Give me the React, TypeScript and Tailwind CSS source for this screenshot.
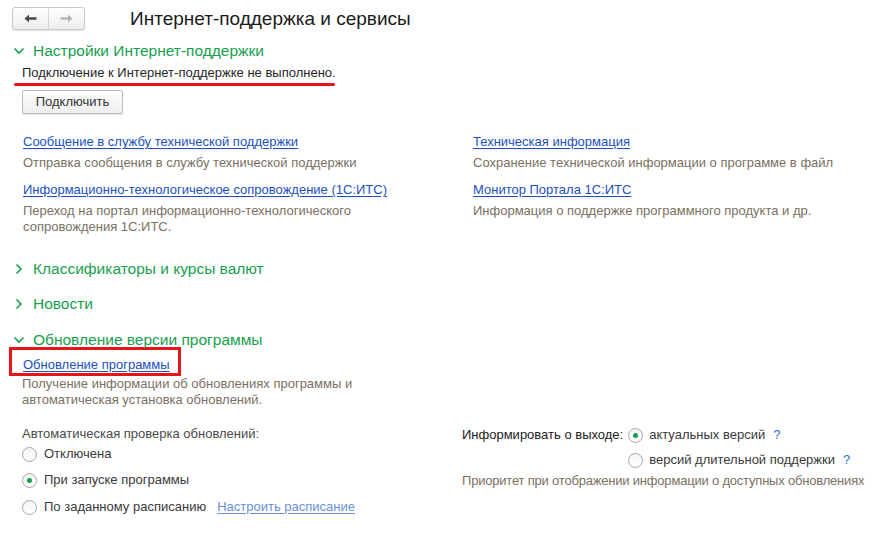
import React from "react";

const font = { fontFamily: '"Liberation Sans", Arial, sans-serif' };

function ChevronDown() {
  return (
    <svg width="12" height="8" viewBox="0 0 12 8" className="shrink-0">
      <path d="M1.5 1.5 L6 6 L10.5 1.5" fill="none" stroke="#16a04e" strokeWidth="1.6" />
    </svg>
  );
}

function ChevronRight() {
  return (
    <svg width="8" height="12" viewBox="0 0 8 12" className="shrink-0">
      <path d="M1.5 1.5 L6 6 L1.5 10.5" fill="none" stroke="#16a04e" strokeWidth="1.6" />
    </svg>
  );
}

function Section({ title, open }: { title: string; open?: boolean }) {
  return (
    <div className="flex items-center h-[18px] text-[15.5px] leading-[18px] text-[#16a04e]">
      {open ? (
        <div className="w-[20px] pl-[13px] flex items-center">
          <ChevronDown />
        </div>
      ) : (
        <div className="w-[20px] pl-[15px] flex items-center">
          <ChevronRight />
        </div>
      )}
      <span className="ml-[13px]">{title}</span>
    </div>
  );
}

function Radio({ checked }: { checked?: boolean }) {
  return (
    <span className="w-[15px] h-[15px] rounded-full border border-[#a6a6a6] bg-gradient-to-b from-[#f4f4f4] to-white flex items-center justify-center shrink-0">
      {checked && <span className="w-[5px] h-[5px] rounded-full bg-[#16a04e]" />}
    </span>
  );
}

function LinkBlock({ link, desc }: { link: string; desc: React.ReactNode }) {
  return (
    <div>
      <div className="text-[13px] leading-[16px] text-[#1c4fbf] underline underline-offset-2">{link}</div>
      <div className="mt-[5px] text-[13px] leading-[16px] text-[#7a7062]">{desc}</div>
    </div>
  );
}

export default function App() {
  return (
    <div className="w-[873px] h-[534px] bg-white overflow-hidden text-[#333]" style={font}>
      {/* header */}
      <div className="flex items-center pt-[7px] pl-[12px]">
        <div className="flex h-[23px] w-[73px] rounded-[3px] border border-[#c9c9c9] bg-gradient-to-b from-white to-[#ededed] shadow-[0_1px_1px_rgba(0,0,0,0.12)]">
          <div className="flex-1 flex items-center justify-center border-r border-[#d6d6d6]">
            <svg width="13" height="9" viewBox="0 0 13 9">
              <path d="M0.5 4.5 L5 0.5 L5 3.3 L12.5 3.3 L12.5 5.7 L5 5.7 L5 8.5 Z" fill="#4a4a4a" />
            </svg>
          </div>
          <div className="flex-1 flex items-center justify-center">
            <svg width="13" height="9" viewBox="0 0 13 9">
              <path d="M12.5 4.5 L8 0.5 L8 3.3 L0.5 3.3 L0.5 5.7 L8 5.7 L8 8.5 Z" fill="#b3b3b3" />
            </svg>
          </div>
        </div>
        <div className="ml-[45px] text-[19px] leading-[22px] text-[#1a1a1a]">Интернет-поддержка и сервисы</div>
      </div>

      {/* section 1 */}
      <div className="mt-[12px]">
        <Section title="Настройки Интернет-поддержки" open />
      </div>
      <div className="mt-[5px] pl-[22px] text-[13px] leading-[16px] text-[#262626]">
        Подключение к Интернет-поддержке не выполнено.
      </div>
      <div className="mt-[2px] ml-[14px] w-[321px] h-[3px] rounded-full bg-[#e8141b]" />
      <div className="mt-[4px] ml-[22px] w-[101px] h-[24px] rounded-[2px] border border-[#bdbdbd] bg-gradient-to-b from-white to-[#eeeeee] shadow-[0_1px_1px_rgba(0,0,0,0.1)] flex items-center justify-center text-[13px] text-[#333]">
        Подключить
      </div>

      <div className="mt-[20px] grid grid-cols-[450px_1fr] pl-[23px]">
        <div>
          <LinkBlock link="Сообщение в службу технической поддержки" desc="Отправка сообщения в службу технической поддержки" />
          <div className="mt-[11px]">
            <LinkBlock
              link="Информационно-технологическое сопровождение (1С:ИТС)"
              desc={
                <>
                  Переход на портал информационно-технологического
                  <br />
                  сопровождения 1С:ИТС.
                </>
              }
            />
          </div>
        </div>
        <div>
          <LinkBlock link="Техническая информация" desc="Сохранение технической информации о программе в файл" />
          <div className="mt-[11px]">
            <LinkBlock link="Монитор Портала 1С:ИТС" desc="Информация о поддержке программного продукта и др." />
          </div>
        </div>
      </div>

      <div className="mt-[25px]">
        <Section title="Классификаторы и курсы валют" />
      </div>
      <div className="mt-[17px]">
        <Section title="Новости" />
      </div>
      <div className="mt-[18px]">
        <Section title="Обновление версии программы" open />
      </div>

      <div className="mt-[-2px] ml-[9px] w-[172px] h-[29px] border-[3px] border-[#e8141b] pl-[11px] pt-[2px]">
        <span className="text-[13px] leading-[16px] text-[#1c4fbf] underline underline-offset-2">Обновление программы</span>
      </div>
      <div className="pl-[22px] text-[13px] leading-[16px] text-[#7a7062]">
        Получение информации об обновлениях программы и
        <br />
        автоматическая установка обновлений.
      </div>

      <div className="mt-[18px] grid grid-cols-[462px_1fr] text-[13px] leading-[16px]">
        <div className="pl-[22px]">
          <div className="text-[#4a4a4a]">Автоматическая проверка обновлений:</div>
          <div className="mt-[3px] flex items-center gap-[7px] h-[18px]">
            <Radio />
            <span className="text-[#3a3a3a]">Отключена</span>
          </div>
          <div className="mt-[8px] flex items-center gap-[7px] h-[18px]">
            <Radio checked />
            <span className="text-[#3a3a3a]">При запуске программы</span>
          </div>
          <div className="mt-[9px] flex items-center gap-[7px] h-[18px]">
            <Radio />
            <span className="text-[#3a3a3a]">По заданному расписанию</span>
            <span className="ml-[4px] text-[#6b8fd6] underline underline-offset-2">Настроить расписание</span>
          </div>
        </div>
        <div>
          <div className="grid grid-cols-[auto_1fr] items-center gap-x-[5px] gap-y-[7px]">
            <span className="text-[#222] h-[18px] flex items-center">Информировать о выходе:</span>
            <div className="flex items-center gap-[6px] h-[18px]">
              <Radio checked />
              <span className="text-[#3a3a3a]">актуальных версий</span>
              <span className="ml-[2px] text-[#2a73c9]">?</span>
            </div>
            <span />
            <div className="flex items-center gap-[6px] h-[18px]">
              <Radio />
              <span className="text-[#3a3a3a]">версий длительной поддержки</span>
              <span className="ml-[2px] text-[#2a73c9]">?</span>
            </div>
          </div>
          <div className="mt-[4px] text-[#7a7062] tracking-[-0.2px] whitespace-nowrap">Приоритет при отображении информации о доступных обновлениях</div>
        </div>
      </div>
    </div>
  );
}
